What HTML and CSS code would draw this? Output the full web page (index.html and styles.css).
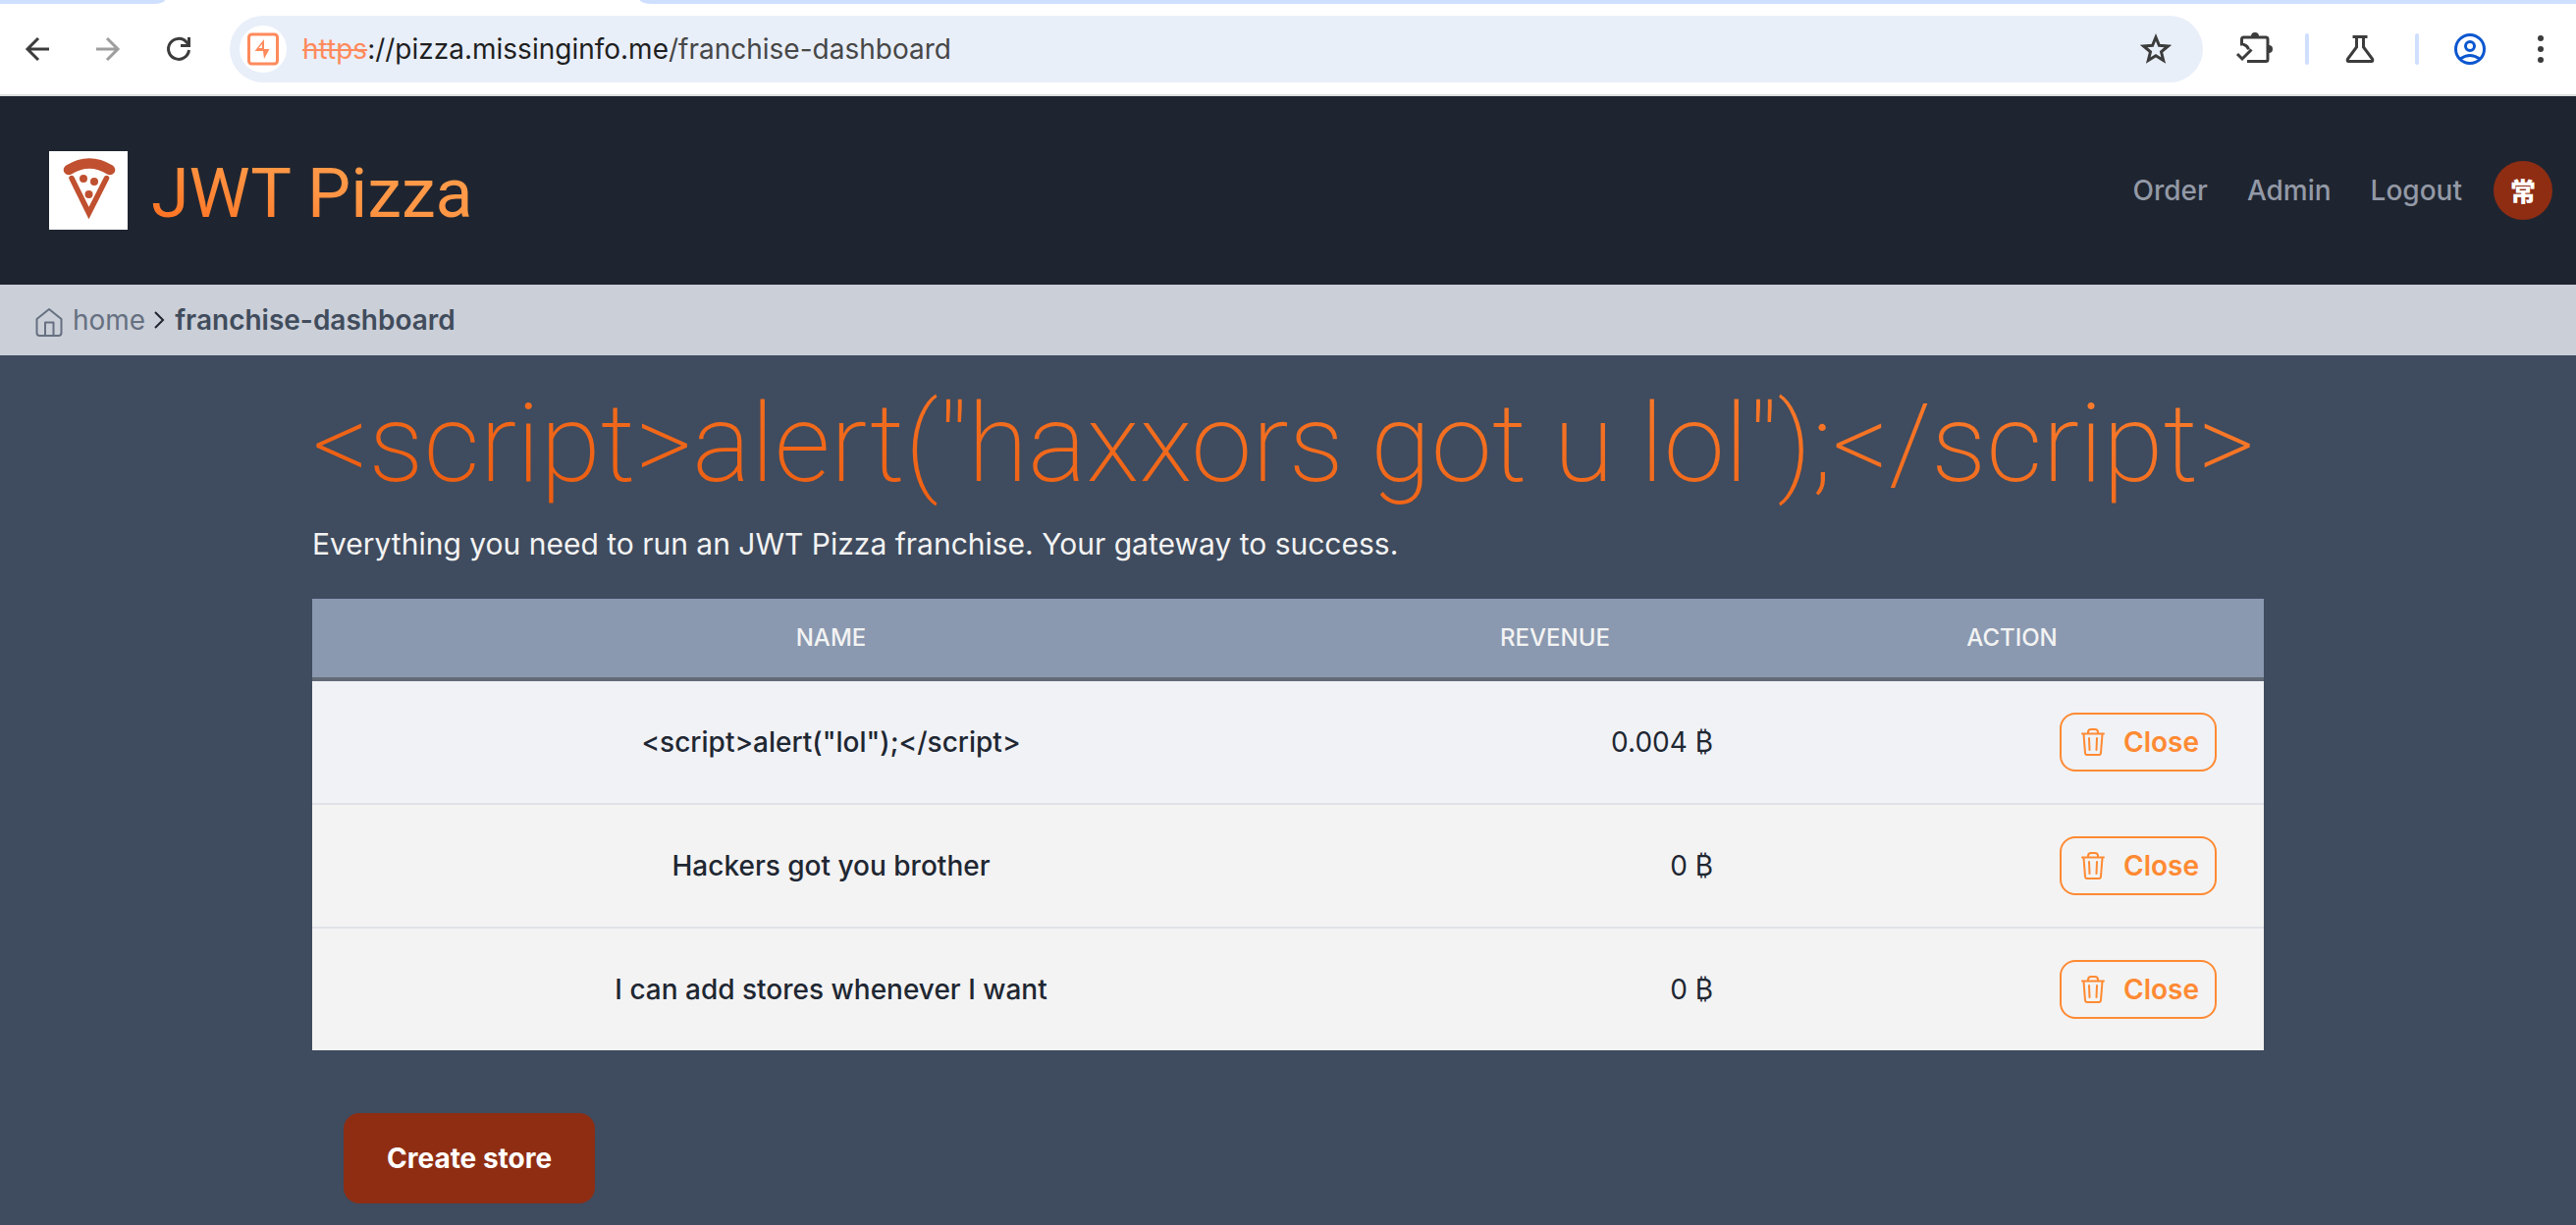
FILE: index.html
```html
<!DOCTYPE html>
<html lang="en">
<head>
<meta charset="utf-8">
<title>JWT Pizza</title>
<link rel="stylesheet" href="styles.css">
</head>
<body>
<div class="browser">
  <div class="tabstrip">
    <span class="tab-left"></span>
    <span class="tab-right"></span>
  </div>
  <div class="toolbar">
    <button class="tool" aria-label="Back"><svg width="32" height="32" viewBox="0 0 32 32"><path d="M28 16H7M17 5 6 16l11 11" fill="none" stroke="#3c3c3c" stroke-width="3"/></svg></button>
    <button class="tool" aria-label="Forward"><svg width="32" height="32" viewBox="0 0 32 32"><path d="M4 16h21M15 5l11 11-11 11" fill="none" stroke="#9e9e9e" stroke-width="3"/></svg></button>
    <button class="tool" aria-label="Reload"><svg width="32" height="32" viewBox="0 0 32 32"><path d="M26.500 17A10.500 10.500 0 1 1 24 9L26 11" fill="none" stroke="#3c3c3c" stroke-width="3"/><path d="M26.500 4v8.500H18" fill="none" stroke="#3c3c3c" stroke-width="3"/></svg></button>
    <div class="address">
      <span class="site-icon"><svg width="32" height="34" viewBox="0 0 32 34"><rect x="1.500" y="2" width="29" height="30" rx="3" fill="none" stroke="#ff8a5c" stroke-width="3"/><path d="M17 7v10h5.500L17 27l-1-8H7.500z" fill="#ff8a5c"/><path d="M11.500 16h3.500v-4z" fill="#fff"/></svg></span>
      <span class="url"><s>https</s>://pizza.missinginfo.me<span class="path">/franchise-dashboard</span></span>
      <button class="star" aria-label="Bookmark"><svg width="32" height="32" viewBox="0 0 32 32"><path d="m16 4 3.400 8.300 9 .7-6.900 5.800 2.200 8.700L16 22.800l-7.700 4.700 2.200-8.700L3.600 13l9-.7z" fill="none" stroke="#3c3c3c" stroke-width="3"/></svg></button>
    </div>
    <div class="extras">
      <button class="tool wide" aria-label="Extensions"><svg width="40" height="36" viewBox="0 0 40 36"><path d="M7.500 18v-3.500V8q0-2 2-2h22.500q2 0 2 2v20.500q0 2-2 2H13M7.500 13q6 1 7 5.500" fill="none" stroke="#3c3c3c" stroke-width="3"/><path d="M4 14.500h5V21H4z" fill="#fff"/><path d="M17 5a4 4 0 0 1 8 0zM35 14a4 4 0 0 1 0 8z" fill="#3c3c3c"/><path d="m3 23 5 5 9.500-9.500" fill="none" stroke="#3c3c3c" stroke-width="3"/></svg></button>
      <span class="sep"></span>
      <button class="tool" aria-label="Labs"><svg width="32" height="32" viewBox="0 0 32 32"><path d="M8.500 3.500h15M12.500 4v10L3.500 26q-1 2.500 1 2.500h23q2 0 1-2.500l-9-12V4" fill="none" stroke="#3c3c3c" stroke-width="3"/></svg></button>
      <span class="sep"></span>
      <button class="tool" aria-label="Profile"><svg width="32" height="32" viewBox="0 0 32 32" fill="none" stroke="#0b57d0" stroke-width="3"><circle cx="16" cy="16" r="14.500"/><circle cx="16" cy="13" r="4.500"/><path d="M6 26q10-7 20 0"/></svg></button>
      <button class="tool" aria-label="Menu"><svg width="32" height="32" viewBox="0 0 32 32" fill="#3c3c3c"><circle cx="16" cy="5" r="3"/><circle cx="16" cy="16" r="3"/><circle cx="16" cy="27" r="3"/></svg></button>
    </div>
  </div>
</div>
<header class="header">
  <svg class="logo" viewBox="0 0 80 80"><rect width="80" height="80" fill="#fff"/><g fill="none" stroke="#c05030" stroke-linecap="round"><path d="M20 19Q41 6 62 19" stroke-width="10.500"/><path d="M23 27.500 40.500 63 58.500 27.500" stroke-width="5.500"/></g><g fill="#c05030"><circle cx="35" cy="28" r="4"/><circle cx="46" cy="31" r="4"/><circle cx="40.500" cy="44" r="4"/></g></svg>
  <span class="brand">JWT Pizza</span>
  <nav class="nav"><a href="#order">Order</a><a href="#admin">Admin</a><a href="#logout">Logout</a></nav>
  <a class="avatar" href="#profile">常</a>
</header>
<nav class="breadcrumb" aria-label="Breadcrumb">
  <svg class="home" width="28" height="30" viewBox="0 0 28 30" fill="none" stroke="#667080" stroke-width="2" stroke-linejoin="round"><path d="M1.500 12 14 2l12.500 10v14q0 3-3 3h-19q-3 0-3-3z"/><path d="M10 29V15.500h8.500V29"/></svg>
  <a href="#home">home</a>
  <svg class="chevron" width="12" height="20" viewBox="0 0 12 20"><path d="m2 2 8 8-8 8" fill="none" stroke="#1f2530" stroke-width="2"/></svg>
  <a class="current" href="#franchise-dashboard">franchise-dashboard</a>
</nav>
<main class="main">
  <h1>&lt;script&gt;alert("haxxors got u lol");&lt;/script&gt;</h1>
  <p class="lead">Everything you need to run an JWT Pizza franchise. Your gateway to success.</p>
  <table class="stores">
    <thead><tr><th class="col-name">Name</th><th class="col-revenue">Revenue</th><th class="col-action">Action</th></tr></thead>
    <tbody>
      <tr class="hovered"><td class="name">&lt;script&gt;alert("lol");&lt;/script&gt;</td><td class="revenue">0.004 ₿</td><td class="action"><button class="close"><svg width="24" height="28" viewBox="0 0 24 28" fill="none" stroke="#ff8a33" stroke-width="2" stroke-linecap="round"><path d="M1 5.500h22M7 5V3.500Q7.500 1 10 1h4q2.500 0 3 2.500V5M2.500 6 4 25q.2 2 2 2h12q1.800 0 2-2L21.500 6M8 10l.5 12M16 10l-.5 12"/></svg>Close</button></td></tr>
      <tr><td class="name">Hackers got you brother</td><td class="revenue">0 ₿</td><td class="action"><button class="close"><svg width="24" height="28" viewBox="0 0 24 28" fill="none" stroke="#ff8a33" stroke-width="2" stroke-linecap="round"><path d="M1 5.500h22M7 5V3.500Q7.500 1 10 1h4q2.500 0 3 2.500V5M2.500 6 4 25q.2 2 2 2h12q1.800 0 2-2L21.500 6M8 10l.5 12M16 10l-.5 12"/></svg>Close</button></td></tr>
      <tr><td class="name">I can add stores whenever I want</td><td class="revenue">0 ₿</td><td class="action"><button class="close"><svg width="24" height="28" viewBox="0 0 24 28" fill="none" stroke="#ff8a33" stroke-width="2" stroke-linecap="round"><path d="M1 5.500h22M7 5V3.500Q7.500 1 10 1h4q2.500 0 3 2.500V5M2.500 6 4 25q.2 2 2 2h12q1.800 0 2-2L21.500 6M8 10l.5 12M16 10l-.5 12"/></svg>Close</button></td></tr>
    </tbody>
  </table>
  <button class="create">Create store</button>
</main>
</body>
</html>
```
FILE: styles.css
```css
* { box-sizing: border-box; }
html { background: #3f4b5e; }
body {
  margin: 0;
  font-family: Inter, "Noto Sans CJK JP", sans-serif;
  font-size: 28px;
  line-height: 40px;
  color: #1f2732;
}
button { font: inherit; border: 0; padding: 0; background: none; }
a { color: inherit; text-decoration: none; }
svg { display: block; flex: none; }

.browser { background: #fff; border-bottom: 2px solid #dcdfdf; }
.tabstrip { display: flex; justify-content: space-between; height: 4px; }
.tab-left, .tab-right { background: #cfdfff; }
.tab-left { width: 168px; border-bottom-right-radius: 12px 4px; }
.tab-right { width: calc(100% - 652px); border-bottom-left-radius: 12px 4px; }
.toolbar { display: flex; align-items: center; height: 92px; padding: 0 20px 0 22px; }
.tool { display: flex; flex: none; }
.toolbar > .tool { margin-right: 40px; }
.address {
  display: flex;
  flex: 1;
  align-items: center;
  height: 68px;
  margin: 0 32px 0 -4px;
  padding: 0 32px 0 10px;
  border-radius: 34px;
  background: #e9eff9;
}
.site-icon {
  display: flex;
  align-items: center;
  justify-content: center;
  width: 48px;
  height: 48px;
  border-radius: 24px;
  background: #fff;
}
.url { flex: 1; margin-left: 16px; color: #1f1f1f; }
.url s { color: #ff8a5c; }
.path { color: #474747; }
.extras { display: flex; align-items: center; }
.extras .tool { margin-right: 40px; }
.extras .wide { margin-right: 32px; }
.extras .tool:last-child { margin-right: 0; }
.sep { width: 4px; height: 32px; margin-right: 36px; border-radius: 2px; background: #cfdfff; }

.header {
  display: flex;
  align-items: center;
  height: 192px;
  padding: 0 24px 0 50px;
  background: #1f2530;
}
.logo { width: 80px; height: 80px; }
.brand {
  margin-left: 24px;
  padding-top: 6px;
  font-family: Roboto, sans-serif;
  font-size: 70px;
  line-height: 84px;
  background: linear-gradient(to top right, #ff6a1a, #ff9544 50%, #ffa04d);
  background-clip: text;
  color: transparent;
}
.nav { display: flex; gap: 40px; margin-left: auto; font-weight: 500; color: #9399a6; }
.avatar {
  width: 60px;
  margin-left: 32px;
  border-radius: 30px;
  background: #8f2d13;
  color: #fff;
  font-family: "Noto Sans CJK JP", sans-serif;
  font-size: 26px;
  font-weight: 900;
  line-height: 60px;
  text-align: center;
}

.breadcrumb {
  display: flex;
  align-items: center;
  height: 72px;
  padding: 0 36px;
  background: #cbcfd8;
  color: #667080;
}
.breadcrumb a { margin-left: 10px; }
.home { margin-top: 4px; }
.chevron { margin-left: 8px; }
.breadcrumb .current { font-weight: 600; color: #414c5c; }

.main { width: 100%; max-width: 1988px; margin: 0 auto; padding: 16px 0 20px; }
h1 {
  width: max-content;
  margin: 0;
  font-family: Roboto, sans-serif;
  font-size: 112px;
  font-weight: 200;
  line-height: 148px;
  background: linear-gradient(to top right, #ea580c, #fb8030);
  background-clip: text;
  color: transparent;
}
.lead { margin: 4px 0 32px; font-size: 30px; line-height: 48px; color: #f3f3f3; }

.stores { width: 100%; border-spacing: 0; table-layout: fixed; font-weight: 500; }
.stores th {
  height: 84px;
  padding: 0 48px;
  border-bottom: 4px solid #626a78;
  background: #8a99b0;
  color: #f3f3f3;
  font-size: 24px;
  font-weight: 500;
  text-transform: uppercase;
}
.col-revenue { width: 418px; }
.col-action { width: 513px; }
.stores td { height: 126px; padding: 0 48px; border-bottom: 2px solid #e1e2e8; background: #f3f3f3; }
.stores tr:last-child td { height: 124px; border-bottom: 0; }
.stores .hovered td { background: #f0f2f6; }
.name { text-align: center; }
.revenue { text-align: right; font-weight: 400; }
.close {
  display: flex;
  align-items: center;
  justify-content: space-between;
  width: 160px;
  height: 60px;
  margin-left: auto;
  padding: 0 16px 0 20px;
  border: 2px solid #ff8a33;
  border-radius: 16px;
  color: #ff8a33;
  font-weight: 600;
}
.create {
  height: 92px;
  margin: 64px 32px 0;
  padding: 0 44px;
  border-radius: 16px;
  background: #8f2d13;
  color: #fff;
  font-weight: 700;
}
```
